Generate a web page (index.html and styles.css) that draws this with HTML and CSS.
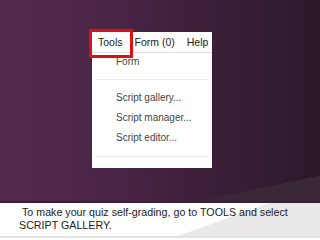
FILE: index.html
```html
<!DOCTYPE html>
<html lang="en">
<head>
<meta charset="UTF-8">
<title>Script gallery</title>
<link rel="stylesheet" href="styles.css">
</head>
<body>

<div class="slide">
    <div class="stage">
        <div class="shot">
            <div class="menubar">
                <span class="menu tools">Tools</span>
                <span class="menu">Form (0)</span>
                <span class="menu">Help</span>
                <div class="highlight"></div>
            </div>
            <div class="dropdown">
                <div class="item first">Form</div>
                <div class="sep"></div>
                <div class="item">Script gallery...</div>
                <div class="item">Script manager...</div>
                <div class="item">Script editor...</div>
                <div class="sep"></div>
            </div>
        </div>
    </div>
    <div class="caption">
        <p>&nbsp;To make your quiz self-grading, go to TOOLS and select<br>SCRIPT GALLERY.</p>
    </div>
</div>

</body>
</html>
```

FILE: styles.css
```css
body {
    margin: 0;
    font-family: "Liberation Sans", Arial, sans-serif;
}
.slide {
    width: 320px;
    height: 240px;
    overflow: hidden;
}
.stage {
    position: relative;
    height: 203px;
    padding-top: 32px;
    box-sizing: border-box;
    background: linear-gradient(90deg, #54294f 0%, #4a2547 35%, #3a1e36 70%, #2c1829 100%);
    border-bottom: 2px solid #3a2036;
}
.stage::after {
    content: "";
    position: absolute;
    left: 0;
    right: 0;
    bottom: 0;
    height: 30px;
    background: #3a2737;
    clip-path: polygon(62% 100%, 100% 15%, 100% 100%);
}
.shot {
    width: 120px;
    height: 136px;
    margin-left: 92px;
    background: #fff;
    box-shadow: 0 0 1px rgba(0, 0, 0, 0.4);
}
.menubar {
    position: relative;
    display: flex;
    height: 20px;
    align-items: center;
    border-bottom: 1px solid #e2e2e2;
    font-size: 10.5px;
    color: #222;
    white-space: nowrap;
}
.menu {
    margin-right: 12px;
}
.tools {
    margin-left: 6px;
}
.highlight {
    position: absolute;
    left: -3px;
    top: -3px;
    width: 38px;
    height: 23px;
    border: 3px solid #e01010;
}
.dropdown {
    padding: 0 4px;
    font-size: 10px;
    color: #444;
}
.item {
    height: 20px;
    line-height: 20px;
    padding-left: 20px;
}
.item.first {
    height: 26px;
    line-height: 18px;
}
.sep {
    height: 1px;
    background: #ececec;
    margin: 0 0 8px;
}
.dropdown .sep:last-child {
    margin-top: 8px;
}
.caption {
    height: 33px;
    background: linear-gradient(160deg, #fff 65%, #ebe8ea 66%);
    border-bottom: 2px solid #e4e4e4;
}
.caption p {
    margin: 0;
    padding: 3px 0 0 19px;
    font-size: 10.7px;
    line-height: 13px;
    color: #222;
}
```
